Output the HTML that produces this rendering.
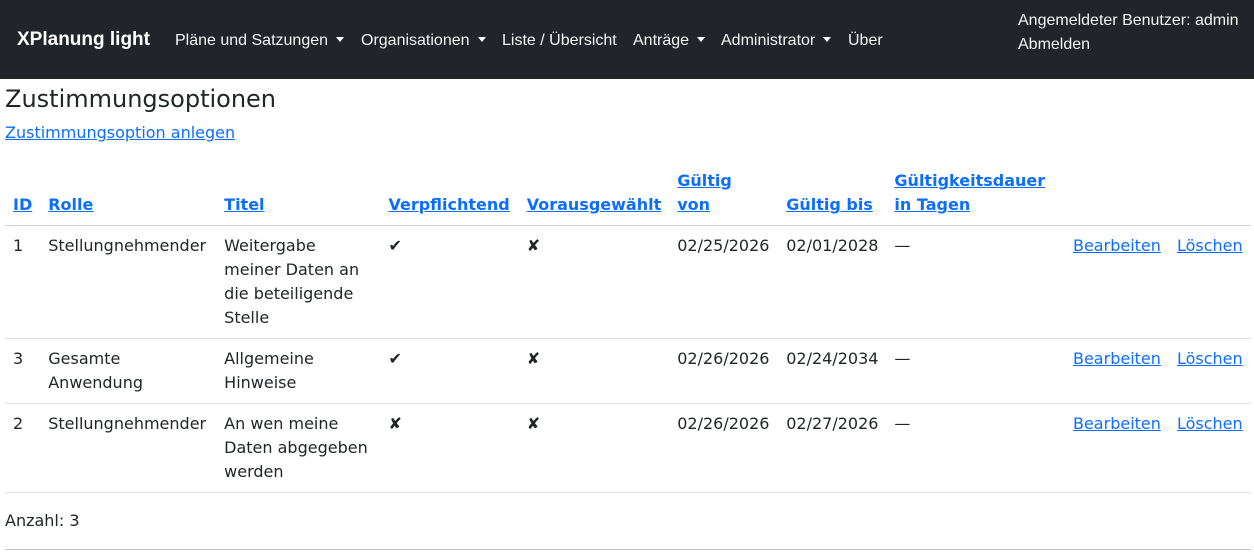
<!DOCTYPE html>
<html><head><meta charset="utf-8"><style>
*{box-sizing:border-box;margin:0;padding:0}
body{width:1254px;height:554px;overflow:hidden;background:#fff;font-family:"DejaVu Sans",sans-serif;font-size:16px;line-height:24px;color:#212529;position:relative}
a{color:#0d6efd;text-decoration:underline}
.nav{position:absolute;left:0;top:0;width:1254px;height:79px;background:#212529;font-family:"Liberation Sans",Arial,sans-serif;color:#fff}
.nav span{position:absolute;top:29px;font-size:16px;line-height:24px;color:rgba(255,255,255,.95)}
.brand{font-size:19px!important;font-weight:bold;left:17px;top:28px!important;color:#fff!important}
.dd::after{content:"";display:inline-block;margin-left:8px;vertical-align:3px;border-top:5px solid #fff;border-left:4.5px solid transparent;border-right:4.5px solid transparent}
.h{position:absolute;left:5px;top:85px;font-size:24px;line-height:29px;font-weight:400}
.add{position:absolute;left:5px;top:121px}
table{position:absolute;left:5px;top:161px;border-collapse:collapse;width:1246px}
th,td{padding:8px;text-align:left;vertical-align:top;border-bottom:1px solid #dee2e6}
th{vertical-align:bottom;font-weight:bold;border-bottom:1px solid #ced4da}
.anz{position:absolute;left:5px;top:509px}
.hr{position:absolute;left:5px;top:549px;width:1246px;border-top:1px solid #c4c4c4}
</style></head><body>
<div class="nav">
<span class="brand">XPlanung light</span>
<span class="dd" style="left:175px">Pläne und Satzungen</span>
<span class="dd" style="left:361px">Organisationen</span>
<span style="left:502px">Liste / Übersicht</span>
<span class="dd" style="left:633px">Anträge</span>
<span class="dd" style="left:721px">Administrator</span>
<span style="left:848px">Über</span>
<span style="left:1018px;top:9px">Angemeldeter Benutzer: admin</span>
<span style="left:1018px;top:33px">Abmelden</span>
</div>
<div class="h">Zustimmungsoptionen</div>
<a class="add" href="#">Zustimmungsoption anlegen</a>
<table>
<colgroup><col style="width:35px"><col style="width:176px"><col style="width:165px"><col style="width:138px"><col style="width:150px"><col style="width:109px"><col style="width:108px"><col style="width:179px"><col style="width:104px"><col style="width:82px"></colgroup>
<tr><th><a href="#">ID</a></th><th><a href="#">Rolle</a></th><th><a href="#">Titel</a></th><th style="padding-left:9px"><a href="#">Verpflichtend</a></th><th style="padding-left:9px"><a href="#">Vorausgewählt</a></th><th><a href="#">Gültig</a><br><a href="#">von</a></th><th><a href="#">Gültig bis</a></th><th><a href="#">Gültigkeitsdauer in Tagen</a></th><th></th><th></th></tr>
<tr><td>1</td><td>Stellungnehmender</td><td>Weitergabe meiner Daten an die beteiligende Stelle</td><td style="padding-left:9px">✔</td><td style="padding-left:9px">✘</td><td>02/25/2026</td><td>02/01/2028</td><td>—</td><td><a href="#">Bearbeiten</a></td><td><a href="#">Löschen</a></td></tr>
<tr><td>3</td><td>Gesamte Anwendung</td><td>Allgemeine Hinweise</td><td style="padding-left:9px">✔</td><td style="padding-left:9px">✘</td><td>02/26/2026</td><td>02/24/2034</td><td>—</td><td><a href="#">Bearbeiten</a></td><td><a href="#">Löschen</a></td></tr>
<tr><td>2</td><td>Stellungnehmender</td><td>An wen meine Daten abgegeben werden</td><td style="padding-left:9px">✘</td><td style="padding-left:9px">✘</td><td>02/26/2026</td><td>02/27/2026</td><td>—</td><td><a href="#">Bearbeiten</a></td><td><a href="#">Löschen</a></td></tr>
</table>
<div class="anz">Anzahl: 3</div>
<div class="hr"></div>
</body></html>
